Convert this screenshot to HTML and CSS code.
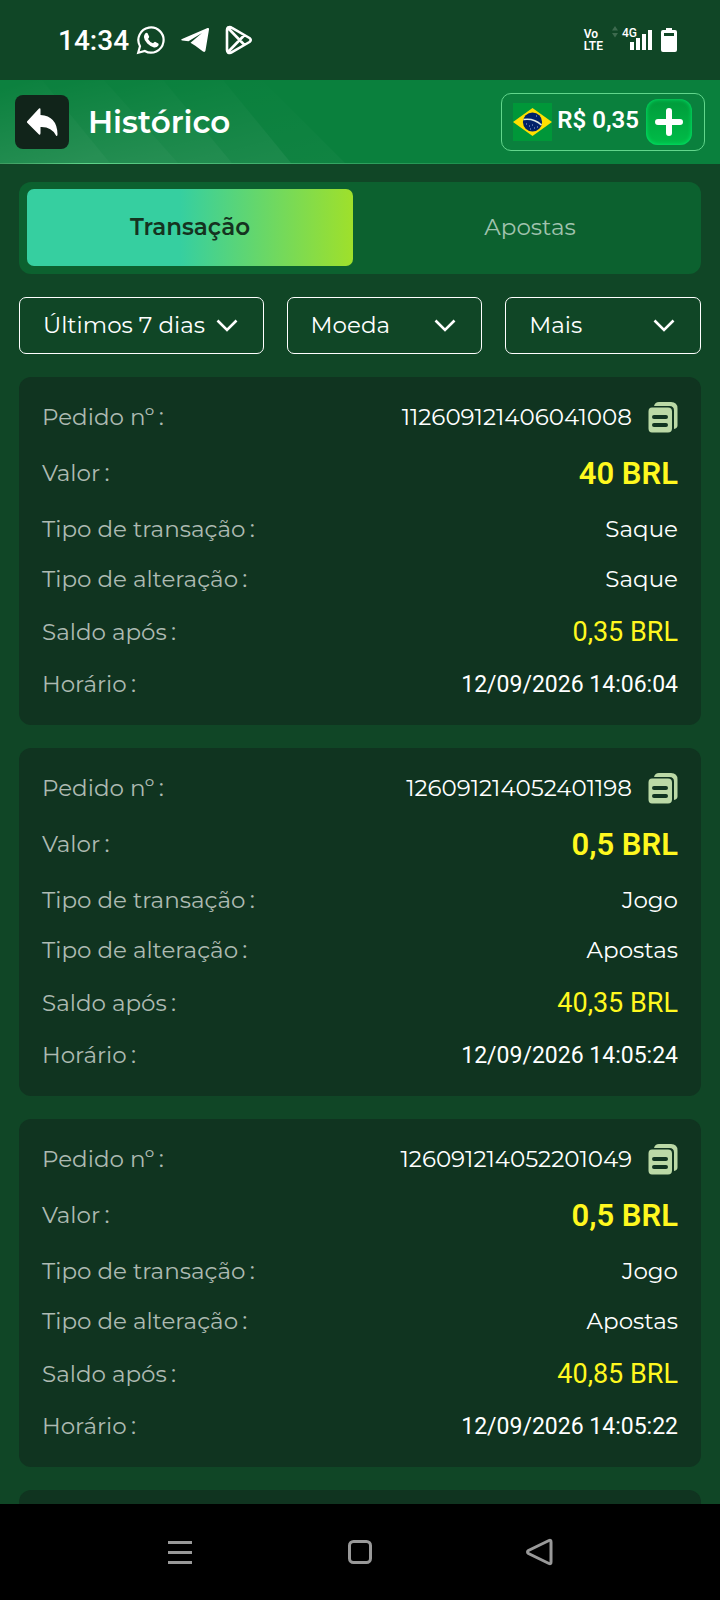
FILE: index.html
```html
<!DOCTYPE html>
<html lang="pt-BR">
<head>
  <meta charset="UTF-8">
  <meta name="viewport" content="width=device-width, initial-scale=1">
  <title>Histórico</title>
  <link rel="stylesheet" href="styles.css">
</head>
<body>
  <svg class="sprite" aria-hidden="true">
    <symbol id="copy" viewBox="0 .5 30 32">
      <path d="M6 4.500Q7 .5 11 .5H23Q29.500 .5 29.500 7V24Q29.500 26.500 26 27.500V9Q26 4.500 21.500 4.500Z"/>
      <path fill-rule="evenodd" d="M4 6H20Q24 6 24 10V27Q24 31 20 31H4Q.5 31 .5 27V10Q.5 6 4 6ZM6 13.500A2 2 0 0 0 6 17.500H18A2 2 0 0 0 18 13.500ZM6 21.500A2 2 0 0 0 6 25.500H18A2 2 0 0 0 18 21.500Z"/>
    </symbol>
    <symbol id="chevron" viewBox="0 0 22 14">
      <path d="M1.500 1.500L11 11L20.500 1.500" fill="none" stroke="currentColor" stroke-width="2.600"/>
    </symbol>
  </svg>

  <div class="status-bar">
    <span class="clock">14:34</span>
    <svg class="whatsapp" width="30" height="30" viewBox="0 0 30 30">
      <path d="M2.200 27.800L4 21.200A12.600 12.600 0 1 1 8.800 26Z" fill="none" stroke="#fff" stroke-width="2.200"/>
      <path fill="#fff" d="M9.200 8.500Q10.500 7.300 11.600 8.300L13.200 11.800Q13.200 12.800 12 14Q13.600 17 17 18.300Q18.300 16.800 19 16.800L22.300 18.400Q23 18.800 22.400 20.400Q21 22.700 18 22.400Q14.500 21.700 11.300 18.600Q8 15 7.900 12Q7.900 10 9.200 8.500Z"/>
    </svg>
    <svg class="telegram" width="28" height="26" viewBox="0 0 28 26">
      <path fill="#fff" d="M1 12L26.500 1Q28.300 .5 28 2.500L24.500 23.500Q24 25.600 22 24.500L14.300 18.700L9.500 15.700L21 6L7.500 14.200L1.200 13.500Q-.5 12.800 1 12Z"/>
    </svg>
    <svg class="play" width="28" height="30" viewBox="0 0 28 30">
      <path d="M3 2.500Q5 1.500 7 2.800L24.500 13Q27 15 24.500 17L7 27.200Q5 28.500 3 27.500Q2 26.500 2 25V5Q2 3.500 3 2.500ZM3 3L19.500 20M3 27L19.500 10" fill="none" stroke="#fff" stroke-width="2.600" stroke-linejoin="round"/>
    </svg>
    <span class="volte">Vo<br>LTE</span>
    <svg class="arrows" width="6" height="12" viewBox="0 0 6 12"><path fill="#3d6a4e" d="M0 4.500L3 0L6 4.500ZM0 7L3 11.500L6 7Z"/></svg>
    <div class="signal">
      <span class="network">4G</span>
      <svg width="22" height="20" viewBox="0 0 22 20"><path fill="#fff" d="M0 12h4v8H0zM6 8h4v12H6zM12 4h4v16h-4zM18 0h4v20h-4z"/></svg>
    </div>
    <svg class="battery" width="16" height="26" viewBox="0 0 16 26"><path fill="#fff" fill-rule="evenodd" d="M5 1h6v2h3q2 0 2 2v18q0 2-2 2H2q-2 0-2-2V5q0-2 2-2h3zM3 6v3h10V6z"/></svg>
  </div>

  <header class="header">
    <svg class="stripes" width="360" height="83" viewBox="0 0 360 83" aria-hidden="true">
      <defs>
        <linearGradient id="fade" x1=".7" y1="1" x2=".3" y2="0">
          <stop offset="0" stop-color="#fff" stop-opacity=".12"/>
          <stop offset="1" stop-color="#fff" stop-opacity=".01"/>
        </linearGradient>
      </defs>
      <g fill="url(#fade)">
        <path d="M0 0H42L110 83H0Z"/>
        <path d="M42 0H104L178 83H110Z" opacity=".9"/>
        <path d="M104 0H163L232 83H178Z" opacity=".8"/>
        <path d="M163 0H223L291 83H232Z" opacity=".6"/>
        <path d="M223 0H262L345 83H291Z" opacity=".2"/>
      </g>
    </svg>
    <button class="back" aria-label="Voltar">
      <svg width="32" height="30" viewBox="0 0 32 30"><path fill="#fff" d="M1 14.500L13 1.500Q14.500 .5 14.500 2.500V8Q31 9 31.500 27Q31.500 30 30 28.500Q25.500 19.500 14.500 20V26Q14.500 28.500 13 27.500L1 15.500Z"/></svg>
    </button>
    <h1>Histórico</h1>
    <div class="balance">
      <svg class="flag" width="39" height="38" viewBox="0 0 39 38" role="img" aria-label="Brasil">
        <path fill="#009739" d="M0 0H39V38H0Z"/>
        <path fill="#ffdf00" d="M0 19L19.500 5L39 19L19.500 33Z"/>
        <circle cx="19.500" cy="19" r="9.600" fill="#012169"/>
        <path d="M10.500 16.500Q21 15 28.500 22" fill="none" stroke="#dfe9e4" stroke-width="1.500"/>
        <path d="M13 21h1M16 23h1M19 22h1M21 25h1M17 26h1M24 24h1M23 13h1" stroke="#9fb2d8"/>
      </svg>
      <span>R$ 0,35</span>
      <button class="plus" aria-label="Depositar">
        <svg width="28" height="28" viewBox="0 0 28 28"><path d="M14 3V25M3 14H25" stroke="#fff" stroke-width="6" stroke-linecap="round"/></svg>
      </button>
    </div>
  </header>

  <main>
    <div class="tabs">
      <button class="tab active">Transação</button>
      <button class="tab">Apostas</button>
    </div>

    <div class="filters">
      <div class="filter">
        <select aria-label="Período"><option>Últimos 7 dias</option></select>
        <svg><use href="#chevron"/></svg>
      </div>
      <div class="filter">
        <select aria-label="Moeda"><option>Moeda</option></select>
        <svg><use href="#chevron"/></svg>
      </div>
      <div class="filter">
        <select aria-label="Mais"><option>Mais</option></select>
        <svg><use href="#chevron"/></svg>
      </div>
    </div>

    <dl class="card">
      <div><dt>Pedido nº<span>:</span></dt><dd>112609121406041008 <button class="copy" aria-label="Copiar"><svg><use href="#copy"/></svg></button></dd></div>
      <div><dt>Valor<span>:</span></dt><dd class="amount">40 BRL</dd></div>
      <div><dt>Tipo de transação<span>:</span></dt><dd>Saque</dd></div>
      <div><dt>Tipo de alteração<span>:</span></dt><dd>Saque</dd></div>
      <div><dt>Saldo após<span>:</span></dt><dd class="after">0,35 BRL</dd></div>
      <div><dt>Horário<span>:</span></dt><dd class="time">12/09/2026 14:06:04</dd></div>
    </dl>

    <dl class="card">
      <div><dt>Pedido nº<span>:</span></dt><dd>126091214052401198 <button class="copy" aria-label="Copiar"><svg><use href="#copy"/></svg></button></dd></div>
      <div><dt>Valor<span>:</span></dt><dd class="amount">0,5 BRL</dd></div>
      <div><dt>Tipo de transação<span>:</span></dt><dd>Jogo</dd></div>
      <div><dt>Tipo de alteração<span>:</span></dt><dd>Apostas</dd></div>
      <div><dt>Saldo após<span>:</span></dt><dd class="after">40,35 BRL</dd></div>
      <div><dt>Horário<span>:</span></dt><dd class="time">12/09/2026 14:05:24</dd></div>
    </dl>

    <dl class="card">
      <div><dt>Pedido nº<span>:</span></dt><dd>126091214052201049 <button class="copy" aria-label="Copiar"><svg><use href="#copy"/></svg></button></dd></div>
      <div><dt>Valor<span>:</span></dt><dd class="amount">0,5 BRL</dd></div>
      <div><dt>Tipo de transação<span>:</span></dt><dd>Jogo</dd></div>
      <div><dt>Tipo de alteração<span>:</span></dt><dd>Apostas</dd></div>
      <div><dt>Saldo após<span>:</span></dt><dd class="after">40,85 BRL</dd></div>
      <div><dt>Horário<span>:</span></dt><dd class="time">12/09/2026 14:05:22</dd></div>
    </dl>

    <div class="card"></div>
  </main>

  <nav class="nav-bar">
    <button aria-label="Recentes"><svg width="28" height="28" viewBox="0 0 28 28"><path d="M2 4.500H26M2 14.500H26M2 24.500H26"/></svg></button>
    <button aria-label="Início"><svg width="28" height="28" viewBox="0 0 28 28"><rect x="3.500" y="3.500" width="21" height="21" rx="4"/></svg></button>
    <button aria-label="Voltar"><svg width="28" height="28" viewBox="0 0 28 28"><path d="M23 2.500Q25 1.500 25 4V24Q25 26.500 23 25.500L2.500 15.500Q.5 14 2.500 12.500Z"/></svg></button>
  </nav>
</body>
</html>
```

FILE: styles.css
```css
* {
  box-sizing: border-box;
}
body {
  margin: 0;
  height: 100vh;
  display: flex;
  flex-direction: column;
  background: #104626;
  color: #fff;
  font-family: Montserrat, Inter, sans-serif;
  font-size: 23px;
}
button, select {
  font: inherit;
  color: inherit;
  border: 0;
  padding: 0;
  background: none;
}
svg {
  display: block;
  flex: none;
}
.sprite {
  display: none;
}

/* status bar */
.status-bar {
  height: 80px;
  flex: none;
  display: flex;
  align-items: center;
  padding: 0 43px 0 58px;
  font-family: Roboto, sans-serif;
}
.clock {
  font-size: 28px;
  font-weight: 500;
}
.whatsapp {
  margin-left: 7px;
}
.telegram {
  margin-left: 15px;
}
.play {
  margin-left: 16px;
}
.volte {
  margin-left: auto;
  font-size: 12px;
  font-weight: 600;
  line-height: 12px;
}
.arrows {
  margin: 0 4px 16px 9px;
}
.signal {
  display: flex;
  align-items: center;
  position: relative;
  padding-left: 8px;
}
.network {
  position: absolute;
  left: 0;
  top: -3px;
  font-size: 12px;
  font-weight: 500;
  line-height: 12px;
}
.battery {
  margin-left: 9px;
}

/* header */
.header {
  height: 84px;
  flex: none;
  display: flex;
  align-items: center;
  padding: 0 15px;
  position: relative;
  background: linear-gradient(90deg, #3d9a5f, #5fd48a 12%, #49b875 30%, #0a803d 80%) bottom / 100% 1px no-repeat #0a803d;
}
.stripes {
  position: absolute;
  left: 0;
  top: 0;
}
.back {
  position: relative;
  width: 54px;
  height: 54px;
  border-radius: 8px;
  background: #11241a;
  display: flex;
  align-items: center;
  justify-content: center;
}
h1 {
  position: relative;
  margin: 0 auto 0 19px;
  font-size: 31px;
  font-weight: 600;
}
.balance {
  height: 58px;
  display: flex;
  align-items: center;
  padding: 0 12px 0 11px;
  border: 1px solid #62d68c;
  border-radius: 10px;
  font-family: Roboto, sans-serif;
  font-size: 24px;
  font-weight: 600;
}
.balance span {
  margin: 0 7px 4px 5px;
}
.plus {
  width: 46px;
  height: 46px;
  border-radius: 12px;
  background: linear-gradient(#009a3a, #00bd48);
  box-shadow: inset 0 0 4px #00f070;
  display: flex;
  align-items: center;
  justify-content: center;
}

/* content */
main {
  flex: 1;
  min-height: 0;
  overflow: hidden;
  padding: 18px 19px 0;
}
.tabs {
  display: grid;
  grid-template-columns: 1fr 1fr;
  gap: 14px;
  height: 92px;
  padding: 7px 8px 8px;
  border-radius: 12px;
  background: #0c612f;
}
.tab {
  padding-bottom: 2px;
  border-radius: 7px;
  color: #a0c3ae;
}
.tab.active {
  background: linear-gradient(90deg, #36cfa0 47%, #9fe02b);
  color: #15331f;
  font-weight: 600;
}
.filters {
  display: grid;
  grid-template-columns: 5fr 4fr 4fr;
  gap: 23px;
  margin: 23px 0;
}
.filter {
  display: grid;
  align-items: center;
}
.filter select {
  grid-area: 1 / 1;
  appearance: none;
  width: 100%;
  height: 57px;
  padding: 0 50px 2px 23px;
  border: 1px solid #fff;
  border-radius: 7px;
}
.filter svg {
  grid-area: 1 / 1;
  justify-self: end;
  width: 22px;
  height: 14px;
  margin-right: 26px;
  pointer-events: none;
}
.card {
  display: flex;
  flex-direction: column;
  gap: 23px;
  margin: 0 0 23px;
  padding: 27px 23px;
  border-radius: 12px;
  background: #103420;
  line-height: 27px;
}
.card div {
  display: flex;
  justify-content: space-between;
  align-items: center;
}
.card dt {
  color: #adbab2;
}
.card dt span {
  margin-left: 4px;
  font-family: Roboto, sans-serif;
}
.card dd {
  display: flex;
  align-items: center;
  margin: 0;
}
.card .amount {
  font-family: Roboto, sans-serif;
  font-size: 31px;
  font-weight: 600;
  line-height: 39px;
  color: #fff81f;
}
.card .after {
  font-family: Roboto, sans-serif;
  font-size: 27px;
  line-height: 32px;
  color: #fff81f;
}
.card .time {
  font-family: Roboto, sans-serif;
}
.copy {
  height: 27px;
  margin-left: 16px;
  display: flex;
  align-items: center;
  color: #bbd9a6;
}
.copy svg {
  width: 30px;
  height: 32px;
  fill: currentColor;
}

/* system navigation */
.nav-bar {
  height: 96px;
  flex: none;
  display: grid;
  grid-template-columns: repeat(3, 1fr);
  place-items: center;
  padding: 0 90px;
  background: #000;
}
.nav-bar svg {
  fill: none;
  stroke: #999;
  stroke-width: 3;
}
```
